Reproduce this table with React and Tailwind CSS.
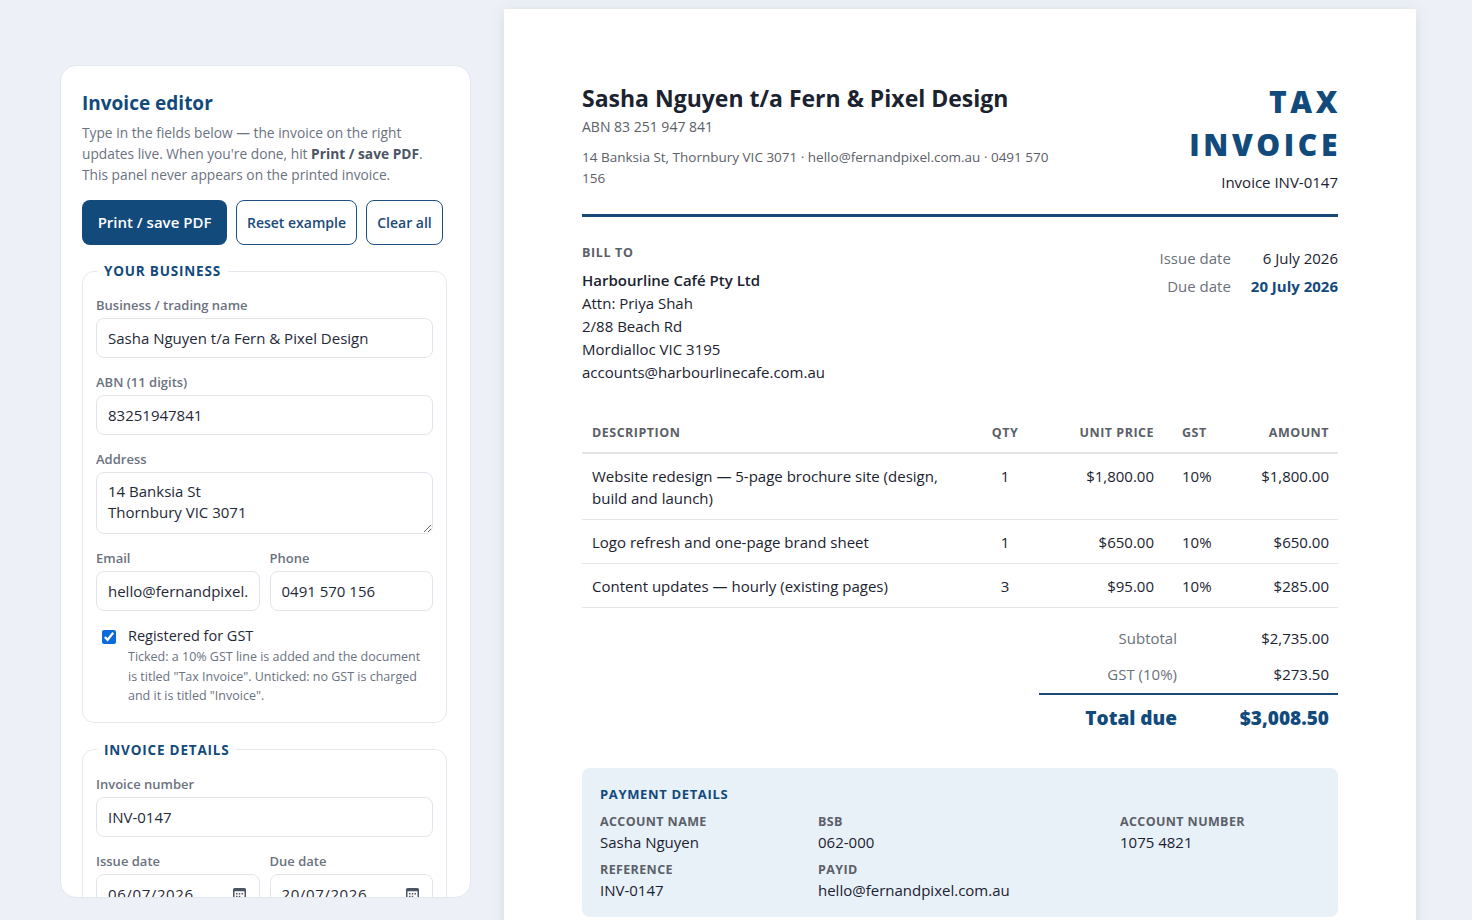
import { useState } from 'react';

const font = { fontFamily: '"Open Sans", "Liberation Sans", sans-serif' };

const items = [
  { desc: 'Website redesign — 5-page brochure site (design, build and launch)', qty: 1, unit: '$1,800.00', gst: '10%', amount: '$1,800.00' },
  { desc: 'Logo refresh and one-page brand sheet', qty: 1, unit: '$650.00', gst: '10%', amount: '$650.00' },
  { desc: 'Content updates — hourly (existing pages)', qty: 3, unit: '$95.00', gst: '10%', amount: '$285.00' },
];

function Field({ label, children, className = '' }) {
  return (
    <label className={`flex flex-col gap-[4px] ${className}`}>
      <span className="text-[13px] font-semibold text-[#6b7280] leading-[18px]">{label}</span>
      {children}
    </label>
  );
}

const inputCls =
  'h-[40px] w-full min-w-0 rounded-lg border border-[#e1e5eb] bg-white px-[11px] text-[15px] text-[#1f2937] outline-none';

function CalendarIcon() {
  return (
    <svg className="absolute right-[14px] top-[13px] pointer-events-none" width="13" height="13" viewBox="0 0 13 13" fill="none">
      <rect x="0.75" y="1.75" width="11.5" height="10.5" rx="1" stroke="#4b5563" strokeWidth="1.5" />
      <rect x="0.75" y="1.75" width="11.5" height="2.5" fill="#4b5563" />
      <rect x="3" y="6" width="1.5" height="1.5" fill="#4b5563" />
      <rect x="5.75" y="6" width="1.5" height="1.5" fill="#4b5563" />
      <rect x="8.5" y="6" width="1.5" height="1.5" fill="#4b5563" />
      <rect x="3" y="8.75" width="1.5" height="1.5" fill="#4b5563" />
      <rect x="5.75" y="8.75" width="1.5" height="1.5" fill="#4b5563" />
    </svg>
  );
}

function Editor() {
  const [gst, setGst] = useState(true);
  return (
    <aside className="mt-[56px] h-[833px] w-[411px] shrink-0 overflow-hidden rounded-2xl border border-[#e3e8ef] bg-white pl-[21px] pr-[23px] pt-[24px]">
      <h1 className="text-[19px] font-bold leading-[26px] text-[#124a7c]">Invoice editor</h1>
      <p className="mt-[6px] text-[13.75px] leading-[21px] text-[#6b7280]">
        Type in the fields below — the invoice on the right updates live. When you're done, hit{' '}
        <b className="font-bold text-[#4b5563]">Print / save PDF</b>. This panel never appears on the printed invoice.
      </p>
      <div className="mt-[15px] flex gap-[9px] whitespace-nowrap">
        <button className="h-[45px] w-[145px] shrink-0 rounded-lg bg-[#124a7c] text-[15px] font-semibold text-white">Print / save PDF</button>
        <button className="h-[45px] w-[121px] shrink-0 rounded-lg border border-[#1d4f80] text-[14px] font-semibold text-[#1a4a7a]">Reset example</button>
        <button className="h-[45px] w-[77px] shrink-0 rounded-lg border border-[#1d4f80] text-[14px] font-semibold text-[#1a4a7a]">Clear all</button>
      </div>

      <div className="mt-[16px] flex flex-col gap-[17px]">
        <fieldset className="rounded-xl border border-[#e5e8ee] px-[13px] pb-[16px] pt-[15px]">
          <legend className="ml-[1px] px-[7px] text-[13.5px] font-bold uppercase leading-[20px] tracking-[0.06em] text-[#124a7c]">
            Your business
          </legend>
          <div className="flex flex-col gap-[15px]">
            <Field label="Business / trading name">
              <input className={inputCls} defaultValue="Sasha Nguyen t/a Fern & Pixel Design" />
            </Field>
            <Field label="ABN (11 digits)">
              <input className={inputCls} defaultValue="83251947841" />
            </Field>
            <Field label="Address">
              <textarea
                className="h-[62px] w-full rounded-lg border border-[#e1e5eb] px-[11px] py-[8px] text-[15px] leading-[21px] text-[#1f2937] outline-none"
                defaultValue={'14 Banksia St\nThornbury VIC 3071'}
              />
            </Field>
            <div className="flex gap-[10px]">
              <Field label="Email" className="flex-1 min-w-0">
                <input className={inputCls} defaultValue="hello@fernandpixel.com.au" />
              </Field>
              <Field label="Phone" className="flex-1 min-w-0">
                <input className={inputCls} defaultValue="0491 570 156" />
              </Field>
            </div>
            <div className="flex gap-[12px] pl-[6px]">
              <input
                type="checkbox"
                checked={gst}
                onChange={(e) => setGst(e.target.checked)}
                className="mt-[4px] h-[14px] w-[14px] shrink-0 accent-[#0b6bdc]"
              />
              <div className="pr-[6px]">
                <div className="text-[14.5px] leading-[20px] text-[#1f2937]">Registered for GST</div>
                <div className="mt-[1px] text-[12.5px] leading-[19.5px] text-[#6b7280]">
                  Ticked: a 10% GST line is added and the document is titled "Tax Invoice". Unticked: no GST is charged and it is titled "Invoice".
                </div>
              </div>
            </div>
          </div>
        </fieldset>

        <fieldset className="rounded-xl border border-[#e5e8ee] px-[13px] pb-[16px] pt-[15px]">
          <legend className="ml-[1px] px-[7px] text-[13.5px] font-bold uppercase leading-[20px] tracking-[0.06em] text-[#124a7c]">
            Invoice details
          </legend>
          <div className="flex flex-col gap-[15px]">
            <Field label="Invoice number">
              <input className={inputCls} defaultValue="INV-0147" />
            </Field>
            <div className="flex gap-[10px]">
              <Field label="Issue date" className="flex-1 min-w-0">
                <div className="relative">
                  <input className={`${inputCls} tracking-[0.04em]`} defaultValue="06/07/2026" />
                  <CalendarIcon />
                </div>
              </Field>
              <Field label="Due date" className="flex-1 min-w-0">
                <div className="relative">
                  <input className={`${inputCls} tracking-[0.04em]`} defaultValue="20/07/2026" />
                  <CalendarIcon />
                </div>
              </Field>
            </div>
          </div>
        </fieldset>
      </div>
    </aside>
  );
}

function Invoice() {
  return (
    <main className="w-[912px] shrink-0 bg-white px-[78px] pb-[60px] pt-[72px] shadow-[0_2px_14px_rgba(15,35,70,0.10)]">
      <header className="flex justify-between border-b-[3px] border-[#174a7a] pb-[22px]">
        <div className="max-w-[475px]">
          <h2 className="text-[23px] font-bold leading-[34px] text-[#1b2230]">Sasha Nguyen t/a Fern &amp; Pixel Design</h2>
          <div className="mt-[2px] text-[14px] leading-[20px] text-[#5b6068]">ABN 83 251 947 841</div>
          <div className="mt-[10px] text-[13.5px] leading-[21px] text-[#5b6068]">
            14 Banksia St, Thornbury VIC 3071 · hello@fernandpixel.com.au · 0491 570 156
          </div>
        </div>
        <div className="flex w-[190px] flex-col items-end text-right">
          <div className="mr-[-3px] mt-[-1px] text-[30px] font-extrabold uppercase leading-[43px] tracking-[0.12em] text-[#124a7c]">
            Tax Invoice
          </div>
          <div className="mt-[6px] text-[15px] leading-[20px] text-[#1b2230]">Invoice INV-0147</div>
        </div>
      </header>

      <section className="mt-[26px] flex justify-between">
        <div>
          <div className="text-[12.5px] font-bold uppercase leading-[20px] tracking-[0.05em] text-[#5b6068]">Bill to</div>
          <div className="mt-[6px] text-[15px] font-semibold leading-[23px] text-[#1b2230]">Harbourline Café Pty Ltd</div>
          <div className="text-[15px] leading-[23px] text-[#1b2230]">
            <div>Attn: Priya Shah</div>
            <div>2/88 Beach Rd</div>
            <div>Mordialloc VIC 3195</div>
            <div>accounts@harbourlinecafe.com.au</div>
          </div>
        </div>
        <div className="mt-[4px] grid grid-cols-[auto_auto] gap-x-[20px] gap-y-[5px] self-start text-right text-[15px] leading-[23px]">
          <div className="text-[#6b7079]">Issue date</div>
          <div className="text-[#1b2230]">6 July 2026</div>
          <div className="text-[#6b7079]">Due date</div>
          <div className="font-bold text-[#124a7c]">20 July 2026</div>
        </div>
      </section>

      <table className="mt-[30px] w-full table-fixed border-collapse text-[15px] leading-[22px] text-[#1b2230]">
        <colgroup>
          <col />
          <col className="w-[70px]" />
          <col className="w-[124px]" />
          <col className="w-[74px]" />
          <col className="w-[100px]" />
        </colgroup>
        <thead>
          <tr className="border-b-2 border-[#e2e4e8] text-[12.5px] font-bold uppercase tracking-[0.04em] text-[#5b6068]">
            <th className="px-[10px] pb-[8px] pt-[8px] text-left font-bold">Description</th>
            <th className="px-[10px] pb-[8px] pt-[8px] text-center font-bold">Qty</th>
            <th className="px-[10px] pb-[8px] pt-[8px] text-right font-bold">Unit price</th>
            <th className="pb-[8px] pl-[18px] pt-[8px] text-left font-bold">GST</th>
            <th className="pb-[8px] pr-[9px] pt-[8px] text-right font-bold">Amount</th>
          </tr>
        </thead>
        <tbody>
          {items.map((it) => (
            <tr key={it.desc} className="border-b border-[#e2e4e8] align-top">
              <td className="py-[10.5px] pl-[10px] pr-[30px]">{it.desc}</td>
              <td className="px-[10px] py-[10.5px] text-center">{it.qty}</td>
              <td className="px-[10px] py-[10.5px] text-right">{it.unit}</td>
              <td className="py-[10.5px] pl-[18px]">{it.gst}</td>
              <td className="py-[10.5px] pr-[9px] text-right">{it.amount}</td>
            </tr>
          ))}
        </tbody>
      </table>

      <div className="mt-[12px] flex justify-end">
        <div className="w-[299px] text-[15px] leading-[22px]">
          <div className="flex py-[7px]">
            <div className="w-[148px] pr-[10px] text-right text-[#6b7079]">Subtotal</div>
            <div className="flex-1 pr-[9px] text-right text-[#1b2230]">$2,735.00</div>
          </div>
          <div className="flex py-[7px] pb-[8px]">
            <div className="w-[148px] pr-[10px] text-right text-[#6b7079]">GST (10%)</div>
            <div className="flex-1 pr-[9px] text-right text-[#1b2230]">$273.50</div>
          </div>
          <div className="flex border-t-2 border-[#174a7a] pt-[10px] text-[19px] font-extrabold leading-[26px] text-[#124a7c]">
            <div className="w-[148px] pr-[10px] text-right">Total due</div>
            <div className="flex-1 pr-[9px] text-right">$3,008.50</div>
          </div>
        </div>
      </div>

      <section className="mt-[37px] rounded-lg bg-[#e8f0f8] px-[18px] pb-[16px] pt-[16px]">
        <div className="text-[13px] font-bold uppercase leading-[20px] tracking-[0.05em] text-[#124a7c]">Payment details</div>
        <div className="mt-[9px] grid grid-cols-[218px_302px_1fr] gap-y-[8px]">
          {[
            ['Account name', 'Sasha Nguyen'],
            ['BSB', '062-000'],
            ['Account number', '1075 4821'],
            ['Reference', 'INV-0147'],
            ['PayID', 'hello@fernandpixel.com.au'],
          ].map(([k, v]) => (
            <div key={k}>
              <div className="text-[12.5px] font-bold uppercase leading-[18px] tracking-[0.03em] text-[#5b6068]">{k}</div>
              <div className="text-[15px] leading-[22px] text-[#1b2230]">{v}</div>
            </div>
          ))}
        </div>
      </section>
    </main>
  );
}

export default function App() {
  return (
    <div style={font} className="flex min-h-screen items-start gap-[33px] bg-[#edf1f7] pl-[60px] pt-[9px]">
      <Editor />
      <Invoice />
    </div>
  );
}
